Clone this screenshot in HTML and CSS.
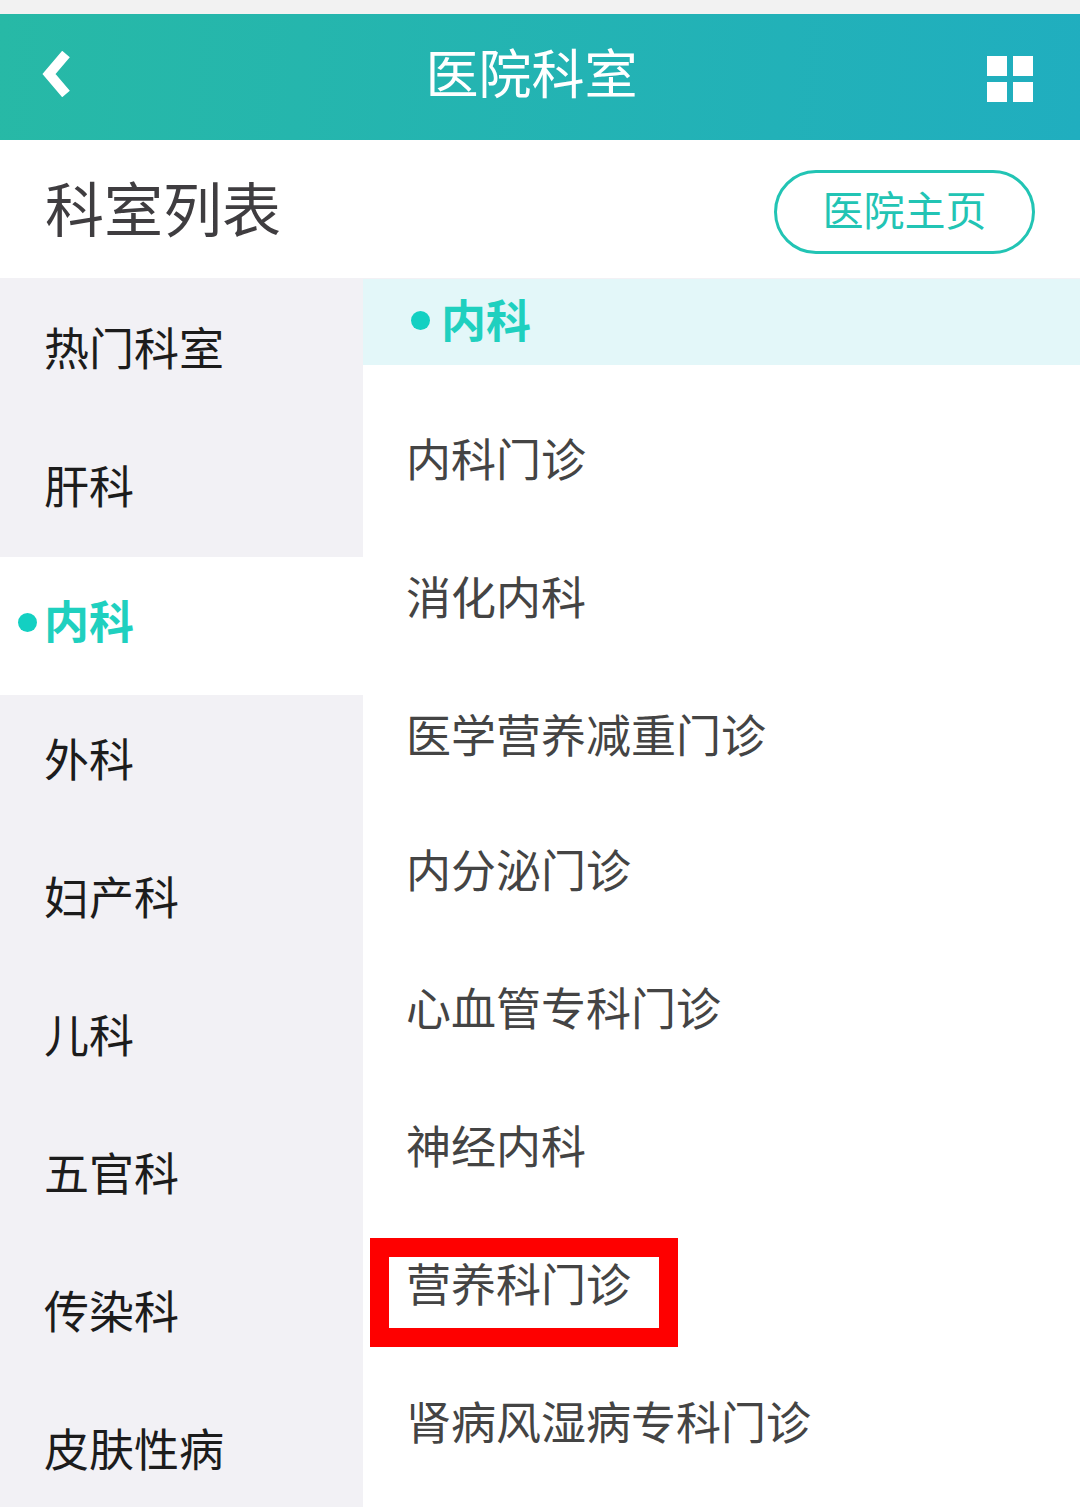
FILE: index.html
```html
<!DOCTYPE html>
<html lang="zh-CN">
<head>
  <meta charset="UTF-8">
  <title>医院科室</title>
  <link rel="stylesheet" href="styles.css">
</head>
<body>
<div class="status-strip"></div>
<header class="top-bar">
  <svg class="back-icon" width="30" height="46" viewBox="0 0 30 46">
    <path d="M24 3 L7 23 L24 43" fill="none" stroke="#fff" stroke-width="10"/>
  </svg>
  <h1 class="top-title">医院科室</h1>
  <div class="grid-icon">
    <span></span><span></span><span></span><span></span>
  </div>
</header>
<div class="list-head">
  <h2 class="list-title">科室列表</h2>
  <a class="home-button">医院主页</a>
</div>
<main class="columns">
  <ul class="side-menu">
    <li>热门科室</li>
    <li>肝科</li>
    <li class="active"><i class="dot"></i>内科</li>
    <li>外科</li>
    <li>妇产科</li>
    <li>儿科</li>
    <li>五官科</li>
    <li>传染科</li>
    <li>皮肤性病</li>
  </ul>
  <section class="dept-list">
    <div class="dept-head"><i class="dot"></i>内科</div>
    <ul class="dept-items">
      <li>内科门诊</li>
      <li>消化内科</li>
      <li>医学营养减重门诊</li>
      <li>内分泌门诊</li>
      <li>心血管专科门诊</li>
      <li>神经内科</li>
      <li>营养科门诊</li>
      <li>肾病风湿病专科门诊</li>
    </ul>
  </section>
  <div class="red-mark"></div>
</main>
</body>
</html>
```

FILE: styles.css
```css
html, body {
  margin: 0;
  padding: 0;
}

body {
  height: 1507px;
  overflow: hidden;
  background: #fff;
  font-family: "Noto Sans CJK SC", "Noto Sans", sans-serif;
}

ul {
  list-style: none;
  margin: 0;
  padding: 0;
}

.status-strip {
  height: 14px;
  background: #f2f2f2;
}

.top-bar {
  height: 126px;
  display: flex;
  align-items: center;
  justify-content: space-between;
  padding: 0 47px 0 42px;
  background: linear-gradient(95deg, #27b9a6, #20aebf);
}

.back-icon {
  margin-top: -6px;
}

.top-title {
  margin: -12px 0 0 4px;
  font-size: 53px;
  font-weight: 400;
  line-height: 60px;
  color: #fff;
}

.grid-icon {
  display: grid;
  grid-template-columns: 20px 20px;
  grid-template-rows: 20px 20px;
  gap: 6px;
  margin-top: 4px;
}

.grid-icon span {
  background: #fff;
}

.list-head {
  height: 138px;
  display: flex;
  align-items: center;
  justify-content: space-between;
  padding: 0 45px;
}

.list-title {
  margin: -4px 0 0 0;
  font-size: 59px;
  font-weight: 400;
  line-height: 70px;
  color: #3f3d40;
}

.home-button {
  box-sizing: border-box;
  width: 261px;
  height: 84px;
  margin-top: 6px;
  padding-bottom: 8px;
  display: flex;
  align-items: center;
  justify-content: center;
  border: 3px solid #22c4b4;
  border-radius: 42px;
  font-size: 41px;
  color: #22c4b4;
}

.columns {
  position: relative;
  display: flex;
  height: 1229px;
}

.side-menu {
  width: 363px;
  background: #f2f1f5;
  padding-top: 3px;
}

.side-menu li {
  box-sizing: border-box;
  height: 138px;
  display: flex;
  align-items: center;
  padding: 0 0 14px 44px;
  font-size: 45px;
  color: #1c1c1c;
}

.side-menu li:nth-child(-n+2) {
  padding-bottom: 8px;
}

.side-menu li.active {
  position: relative;
  background: #fff;
  font-weight: 700;
  color: #1fd0bf;
}

.side-menu .dot {
  position: absolute;
  left: 18px;
  top: 56px;
}

.dot {
  width: 19px;
  height: 19px;
  border-radius: 50%;
  background: #13d0c2;
}

.dept-list {
  flex: 1;
}

.dept-head {
  box-sizing: border-box;
  height: 87px;
  display: flex;
  align-items: center;
  gap: 11px;
  padding: 0 0 8px 48px;
  border-top: 1px solid #f2f1f5;
  font-size: 45px;
  font-weight: 700;
  color: #1fd0bf;
  background: #e3f7f9;
}

.dept-head .dot {
  margin-top: 4px;
}

.dept-items {
  padding-top: 26px;
}

.dept-items li {
  box-sizing: border-box;
  height: 138px;
  display: flex;
  align-items: center;
  padding: 0 0 12px 43px;
  font-size: 45px;
  color: #444;
}

.dept-items li:nth-child(-n+3) {
  padding-bottom: 6px;
}

.red-mark {
  position: absolute;
  left: 370px;
  top: 960px;
  box-sizing: border-box;
  width: 308px;
  height: 109px;
  border: 19px solid #fe0000;
}
```
